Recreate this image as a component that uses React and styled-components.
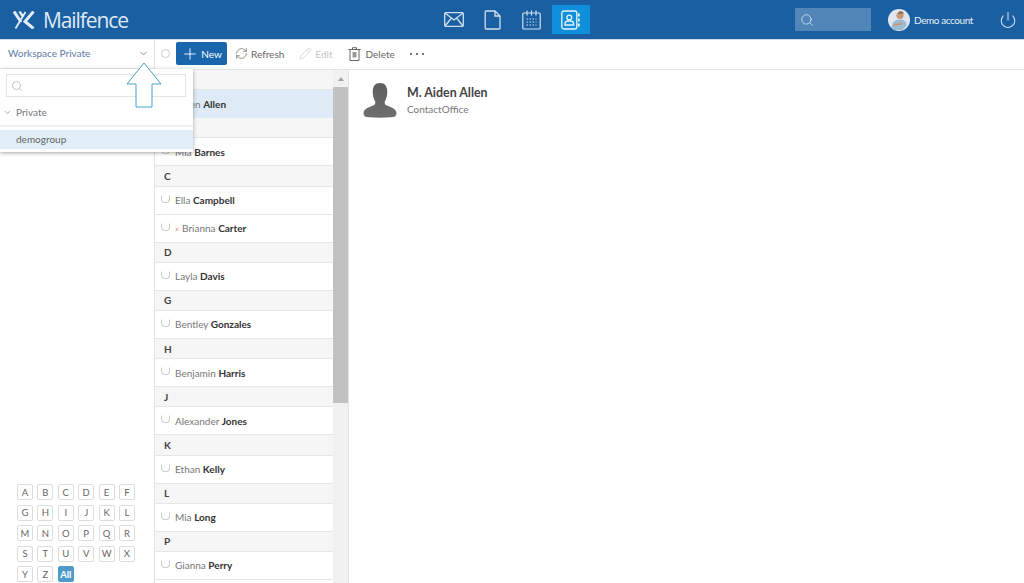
import styled, { createGlobalStyle } from 'styled-components';
import { Search, ChevronDown, Plus, RefreshCw, Pencil, Power } from 'lucide-react';

const GlobalStyle = createGlobalStyle`
  html, body {
    margin: 0;
    padding: 0;
    height: 100%;
    overflow: hidden;
    background: #fff;
    font-family: Lato, "Open Sans", sans-serif;
  }
`;

const Page = styled.div`
  position: relative;
  width: 1024px;
  height: 583px;
  overflow: hidden;
  display: flex;
  flex-direction: column;
`;

const Header = styled.header`
  height: 40px;
  box-sizing: border-box;
  flex: none;
  background: #1a5fa2;
  display: grid;
  grid-template-columns: 1fr auto 1fr;
  align-items: center;
  border-bottom: 1px solid #cfd8e3;
`;

const Logo = styled.div`
  display: flex;
  align-items: center;
  gap: 7px;
  padding-left: 13px;
  color: #dfe9f3;
  font-family: "Open Sans", sans-serif;
  font-size: 21px;
  letter-spacing: -1.1px;
  svg { display: block; }
`;

const AppNav = styled.nav`
  display: flex;
  align-items: center;
  gap: 1px;
`;

const AppIcon = styled.div`
  width: 38px;
  height: 29px;
  display: flex;
  align-items: center;
  justify-content: center;
  background: ${p => (p.$active ? '#0f8fdc' : 'transparent')};
`;

const HeaderRight = styled.div`
  display: flex;
  align-items: center;
  justify-content: flex-end;
  padding-right: 7px;
`;

const HeaderSearch = styled.div`
  width: 76px;
  height: 23px;
  background: #5386b8;
  display: flex;
  align-items: center;
  padding-left: 5px;
  margin-right: 17px;
  box-sizing: border-box;
`;

const Account = styled.div`
  display: flex;
  align-items: center;
  gap: 4px;
  color: #e6eef6;
  font-size: 10px;
  letter-spacing: -0.42px;
  margin-right: 26px;
`;

const Body = styled.div`
  flex: 1;
  min-height: 0;
  display: grid;
  grid-template-columns: 155px 1fr;
  grid-template-rows: minmax(0, 1fr);
`;

const Sidebar = styled.aside`
  display: flex;
  flex-direction: column;
  min-height: 0;
  border-right: 1px solid #e2e2e2;
`;

const WorkspaceBar = styled.div`
  height: 29px;
  flex: none;
  box-sizing: border-box;
  display: flex;
  align-items: center;
  justify-content: space-between;
  padding: 0 5px 2px 8px;
  color: #5c7aa8;
  font-size: 10px;
  border-bottom: 1px solid #eee;
`;

const AlphaGrid = styled.div`
  margin-top: auto;
  padding: 0 0 1px 17px;
  display: grid;
  grid-template-columns: repeat(6, 16px);
  grid-auto-rows: 16px;
  gap: 4.4px;
`;

const AlphaKey = styled.div`
  box-sizing: border-box;
  border: 1px solid ${p => (p.$active ? '#4f9ac9' : '#ddd')};
  border-radius: 2px;
  background: ${p => (p.$active ? '#4f9ac9' : '#fff')};
  color: ${p => (p.$active ? '#fff' : '#666')};
  font-size: 9.5px;
  font-weight: ${p => (p.$active ? 700 : 400)};
  display: flex;
  align-items: center;
  justify-content: center;
`;

const Main = styled.main`
  display: flex;
  flex-direction: column;
  min-width: 0;
  min-height: 0;
`;

const Toolbar = styled.div`
  height: 30px;
  box-sizing: border-box;
  flex: none;
  display: flex;
  align-items: center;
  padding: 0 0 2px 6px;
  border-bottom: 1px solid #e4e4e4;
`;

const Radio = styled.span`
  width: 9px;
  height: 9px;
  box-sizing: border-box;
  border: 1px solid #ccc;
  border-radius: 50%;
  flex: none;
  margin-right: 6px;
`;

const NewButton = styled.button`
  width: 51px;
  height: 23px;
  border: 0;
  border-radius: 2px;
  padding: 0;
  background: #1a66ad;
  color: #fff;
  font: 400 10px Lato, sans-serif;
  display: flex;
  align-items: center;
  justify-content: center;
  gap: 2px;
  margin-right: 8px;
`;

const ToolButton = styled.div`
  display: flex;
  align-items: center;
  gap: ${p => p.$gap || 3}px;
  color: ${p => (p.$disabled ? '#c4c4c4' : '#666')};
  font-size: 10px;
  margin-right: ${p => p.$after || 15}px;
  svg { flex: none; }
`;

const More = styled.div`
  display: flex;
  gap: 4px;
  span {
    width: 2px;
    height: 2px;
    border-radius: 50%;
    background: #444;
  }
`;

const Columns = styled.div`
  flex: 1;
  min-height: 0;
  display: grid;
  grid-template-columns: 178px 15px 1fr;
  grid-template-rows: minmax(0, 1fr);
`;

const ContactList = styled.div`
  overflow: hidden;
  min-width: 0;
  min-height: 0;
`;

const LetterRow = styled.div`
  height: 20.2px;
  box-sizing: border-box;
  background: #f6f6f6;
  padding-left: 9px;
  display: flex;
  align-items: center;
  font-size: 10px;
  font-weight: 700;
  color: #444;
  border-bottom: 1px solid #e6e6e6;
`;

const ContactRow = styled.div`
  height: 28px;
  box-sizing: border-box;
  padding-left: 6px;
  display: flex;
  align-items: center;
  gap: 5px;
  font-size: 10px;
  color: #777;
  background: ${p => (p.$selected ? '#deeaf5' : '#fff')};
  border-bottom: 1px solid ${p => (p.$selected ? '#deeaf5' : '#e6e6e6')};
  b { color: #333; font-weight: 700; }
  i { color: #d9776c; font-style: normal; font-size: 7px; margin-right: 3px; }
`;

const Check = styled.span`
  width: 9px;
  height: 8px;
  box-sizing: border-box;
  border: 1px solid #ccc;
  border-top-color: transparent;
  border-radius: 1px 1px 4px 4px;
  flex: none;
  margin-top: -3px;
`;

const Scrollbar = styled.div`
  background: #f1f1f1;
  display: flex;
  flex-direction: column;
  align-items: center;
`;

const ScrollArrow = styled.div`
  height: 17px;
  flex: none;
  display: flex;
  align-items: center;
  justify-content: center;
  &::before {
    content: '';
    border-left: 3.5px solid transparent;
    border-right: 3.5px solid transparent;
    border-bottom: 4px solid #a3a3a3;
  }
`;

const ScrollThumb = styled.div`
  width: 100%;
  height: 316px;
  flex: none;
  background: #c1c1c1;
`;

const Detail = styled.section`
  border-left: 1px solid #e4e4e4;
  padding: 13px 0 0 14px;
  display: flex;
  align-items: flex-start;
  gap: 10px;
`;

const ContactName = styled.div`
  font-size: 12.4px;
  font-weight: 700;
  color: #444;
  margin-top: 2px;
`;

const ContactOrg = styled.div`
  font-size: 10px;
  color: #777;
  margin-top: 3px;
`;

const Dropdown = styled.div`
  position: absolute;
  left: 0;
  top: 69px;
  width: 193px;
  height: 83px;
  box-sizing: border-box;
  background: #fff;
  box-shadow: 0 1px 4px rgba(0, 0, 0, 0.35);
  padding-top: 5px;
`;

const DropdownSearch = styled.div`
  width: 180px;
  height: 23px;
  margin-left: 6px;
  box-sizing: border-box;
  border: 1px solid #e4e4e4;
  display: flex;
  align-items: center;
  padding-left: 4px;
`;

const GroupTitle = styled.div`
  height: 28px;
  box-sizing: border-box;
  margin-top: 2px;
  display: flex;
  align-items: center;
  gap: 4px;
  padding-left: 3px;
  font-size: 10px;
  color: #777;
  border-bottom: 2px solid #f0f0f0;
`;

const GroupItem = styled.div`
  height: 19px;
  margin-top: 3px;
  background: #e1eef8;
  padding: 0 0 2px 16px;
  box-sizing: border-box;
  display: flex;
  align-items: center;
  font-size: 10px;
  color: #666;
`;

const Arrow = styled.svg`
  position: absolute;
  left: 126px;
  top: 62px;
`;

const alphabet = 'ABCDEFGHIJKLMNOPQRSTUVWXYZ'.split('');

const contacts = [
  { letter: 'A', first: 'Aiden', last: 'Allen', selected: true },
  { letter: 'B', first: 'Mia', last: 'Barnes' },
  { letter: 'C', first: 'Ella', last: 'Campbell' },
  { first: 'Brianna', last: 'Carter', mark: true },
  { letter: 'D', first: 'Layla', last: 'Davis' },
  { letter: 'G', first: 'Bentley', last: 'Gonzales' },
  { letter: 'H', first: 'Benjamin', last: 'Harris' },
  { letter: 'J', first: 'Alexander', last: 'Jones' },
  { letter: 'K', first: 'Ethan', last: 'Kelly' },
  { letter: 'L', first: 'Mia', last: 'Long' },
  { letter: 'P', first: 'Gianna', last: 'Perry' },
];

const navStroke = '#cfe0f0';

const MailIcon = () => (
  <svg width="20" height="15" viewBox="0 0 20 15" fill="none" stroke={navStroke} strokeWidth="1.3">
    <rect x="0.7" y="0.7" width="18.6" height="13.6" rx="1" />
    <path d="M1 1l9 7 9-7M1 14l6.5-8M19 14l-6.5-8" />
  </svg>
);

const FileIcon = () => (
  <svg width="17" height="20" viewBox="0 0 17 20" fill="none" stroke={navStroke} strokeWidth="1.3">
    <path d="M1.2 2a1 1 0 0 1 1-1h8.800l5 5v12a1 1 0 0 1-1 1H2.200a1 1 0 0 1-1-1zM11 1v5h5" />
  </svg>
);

const CalendarIcon = () => (
  <svg width="19" height="20" viewBox="0 0 19 20" fill="none" stroke={navStroke} strokeWidth="1.2">
    <rect x="0.8" y="3" width="17.4" height="16" rx="1" />
    <path d="M5 0.5v5M9.500 0.5v5M14 0.5v5" />
    <path d="M4.500 9h10M4.500 12h10M4.500 15h10" strokeDasharray="1.5 1.5" />
  </svg>
);

const AddressBookIcon = () => (
  <svg width="19" height="20" viewBox="0 0 19 20" fill="none" stroke="#eaf5fd" strokeWidth="1.3">
    <rect x="0.8" y="1" width="15" height="18" rx="2" />
    <circle cx="8.300" cy="7.500" r="2.400" />
    <path d="M4 15v-1.500a3 3 0 0 1 3-2.500h2.600a3 3 0 0 1 3 2.500V15z" />
    <path d="M17.800 3.500v3M17.800 8.500v3M17.800 13.500v3" strokeWidth="1.800" />
  </svg>
);

const LogoMark = () => (
  <svg width="23" height="18" viewBox="0 0 23 18" fill="none" stroke="#e4edf6" strokeLinecap="butt">
    <path d="M1 0.5L8 11" strokeWidth="3" />
    <path d="M6.500 0.500L10 5.500" strokeWidth="2.400" />
    <path d="M12.500 1L2.500 17.500" strokeWidth="1.800" />
    <path d="M20.500 0.500L12 10.500L20.500 17.500" strokeWidth="3" />
  </svg>
);

const Avatar = () => (
  <svg width="22" height="22" viewBox="0 0 22 22">
    <circle cx="11" cy="11" r="11" fill="#dfe6ee" />
    <circle cx="12" cy="6.500" r="3.600" fill="#c79a78" />
    <path d="M11 2.500a4 3 0 0 1 5 2l-6 .5z" fill="#8a6a50" />
    <path d="M3.500 19c0-5.500 3.500-8.500 8.500-8.500s6.500 2.500 6.500 6l-4 4.500H7z" fill="#9dbad3" />
    <path d="M6 16l8-1.500" stroke="#c79a78" strokeWidth="1.800" />
  </svg>
);

const TrashIcon = () => (
  <svg width="13" height="14" viewBox="0 0 13 14" fill="none" stroke="#666" strokeWidth="1">
    <path d="M0.500 2.500h12M4.500 2.500V0.700h4v1.800M2 2.500v11h9v-11" />
    <rect x="4.500" y="5" width="4" height="5.500" fill="#999" stroke="none" />
  </svg>
);

const Silhouette = () => (
  <svg width="34" height="35" viewBox="0 0 34 36">
    <defs>
      <linearGradient id="bust" x1="0" y1="0" x2="0" y2="1">
        <stop offset="0" stopColor="#5e5e5e" />
        <stop offset="1" stopColor="#6f6f6f" />
      </linearGradient>
    </defs>
    <path
      fill="url(#bust)"
      d="M17 0c5 0 7.500 3.500 7.500 9 0 4-1 7-2.500 10-.5 2 0 3.500 2.500 4.500 4 1.500 8.500 3 9.500 7 .3 1.500-1 4-3 4.500-9 1-19 1-28 0-2-.5-3.300-3-3-4.500 1-4 5.500-5.500 9.500-7 2.500-1 3-2.500 2.500-4.500-1.500-3-2.500-6-2.500-10 0-5.500 2.500-9 7.500-9z"
    />
  </svg>
);

function App() {
  return (
    <Page>
      <GlobalStyle />
      <Header>
        <Logo>
          <LogoMark />
          Mailfence
        </Logo>
        <AppNav>
          <AppIcon><MailIcon /></AppIcon>
          <AppIcon><FileIcon /></AppIcon>
          <AppIcon><CalendarIcon /></AppIcon>
          <AppIcon $active><AddressBookIcon /></AppIcon>
        </AppNav>
        <HeaderRight>
          <HeaderSearch>
            <Search size={14} color="#cfe0f0" strokeWidth={1.5} />
          </HeaderSearch>
          <Account>
            <Avatar />
            Demo account
          </Account>
          <Power size={18} color="#cfe0f0" strokeWidth={1.4} />
        </HeaderRight>
      </Header>
      <Body>
        <Sidebar>
          <WorkspaceBar>
            Workspace Private
            <ChevronDown size={11} color="#667" strokeWidth={1.5} />
          </WorkspaceBar>
          <AlphaGrid>
            {alphabet.map(l => <AlphaKey key={l}>{l}</AlphaKey>)}
            <AlphaKey $active>All</AlphaKey>
          </AlphaGrid>
        </Sidebar>
        <Main>
          <Toolbar>
            <Radio />
            <NewButton><Plus size={18} strokeWidth={1.2} />New</NewButton>
            <ToolButton><RefreshCw size={13} strokeWidth={1.3} />Refresh</ToolButton>
            <ToolButton $disabled $after={16}><Pencil size={13} strokeWidth={1.2} />Edit</ToolButton>
            <ToolButton $gap={4}><TrashIcon />Delete</ToolButton>
            <More><span /><span /><span /></More>
          </Toolbar>
          <Columns>
            <ContactList>
              {contacts.map(c => (
                <div key={c.last}>
                  {c.letter && <LetterRow>{c.letter}</LetterRow>}
                  <ContactRow $selected={c.selected}>
                    <Check />
                    <span>{c.mark && <i>×</i>}{c.first} <b>{c.last}</b></span>
                  </ContactRow>
                </div>
              ))}
            </ContactList>
            <Scrollbar>
              <ScrollArrow />
              <ScrollThumb />
            </Scrollbar>
            <Detail>
              <Silhouette />
              <div>
                <ContactName>M. Aiden Allen</ContactName>
                <ContactOrg>ContactOffice</ContactOrg>
              </div>
            </Detail>
          </Columns>
        </Main>
      </Body>
      <Dropdown>
        <DropdownSearch>
          <Search size={12} color="#aaa" strokeWidth={1.4} />
        </DropdownSearch>
        <GroupTitle>
          <ChevronDown size={9} color="#888" />
          Private
        </GroupTitle>
        <GroupItem>demogroup</GroupItem>
      </Dropdown>
      <Arrow width="36" height="47" viewBox="0 0 36 47" fill="#fff" stroke="#4aa3c9" strokeWidth="1">
        <path d="M18 1L35 22H26V45H10V22H1z" />
      </Arrow>
    </Page>
  );
}

export default App;
